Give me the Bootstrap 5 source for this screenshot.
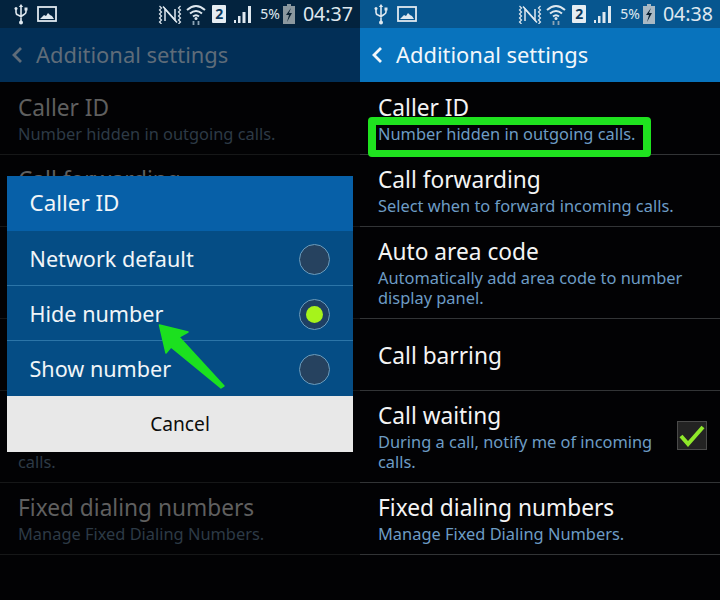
<!doctype html>
<html lang="en">
<head>
<meta charset="utf-8">
<title>Additional settings</title>
<link href="https://cdn.jsdelivr.net/npm/bootstrap@5.3.0/dist/css/bootstrap.min.css" rel="stylesheet">
<style>
html,body{margin:0;width:720px;height:600px;overflow:hidden;background:#020204}
body{font-family:"Noto Sans","Open Sans",sans-serif}
.handset{width:360px;height:600px;position:relative;overflow:hidden;background:#020204;
  --st:#07568f;--hd:#0873bd;--hdtx:#f2f7fb;--ti:#f4f4f4;--su:#6d9cc4;--ln:#323436;--bat:#a9b9c4}
.handset.dimmed{--st:#03233e;--hd:#022f57;--hdtx:#5f6c79;--ti:#5f5f5f;--su:#2d3a46;--ln:#161718;--bat:#8b989f}
.stat{height:28px;background:var(--st);color:#dfe8ef;padding:0 7px 0 14px}
.stat svg{display:block;flex:none}
.picicon{margin-left:9px}
.wifiicon{margin-left:4px}
.clock{font-size:19.6px;line-height:28px;margin-left:8px}
.pct{font-size:14px;line-height:28px;margin-left:8px;margin-right:3px}
.simtag{width:14px;height:18px;background:#e6edf2;color:#0b3a5e;font-size:14px;font-weight:700;line-height:18px;text-align:center;border-radius:1px;margin-left:6px;margin-right:8px}
.headbar{height:54px;background:var(--hd);color:var(--hdtx);padding:0 0 0 11px}
.headbar span{font-size:21.9px;line-height:54px;margin-left:13px;white-space:nowrap}
.setlist{--bs-list-group-bg:transparent;--bs-list-group-border-width:0;border-radius:0}
.setrow{height:72.5px;padding:3px 18px 0;background:transparent;border-bottom:1px solid var(--ln)!important}
.setrow.tallrow{height:91.5px}
.rowtitle{font-size:22.7px;line-height:25px;color:var(--ti);white-space:nowrap}
.rowsub{font-size:16.4px;line-height:20px;color:var(--su);margin-top:4px}
.tick{width:30px;height:29px;background:#232323;border:1px solid #4a4a4a;flex:none;margin-right:-5px;margin-bottom:4px}
.dimmed .tick{visibility:hidden}
.mark-box{position:absolute;left:8px;top:117px;width:283px;height:40px;border:8px solid #1fe21f;border-bottom-width:7px;border-radius:4px}
.callerdlg{position:absolute;left:7px;top:176px;width:346px;height:276px;background:#054d85;color:#f1f5f8}
.dlghead{height:55px;background:#0760a8;padding-left:22.5px;font-size:22.4px;line-height:53px}
.dlgopt{height:55px;padding:2px 23px 0 22.5px;font-size:21.6px;border-bottom:1px solid #2c75a8}
.dlgopt.lastopt{border-bottom:0}
.dlgcancel{height:56px;background:#e8e8e8;color:#0c0c0c;font-size:19.2px;line-height:56px;text-align:center;border:0;border-radius:0;padding:0;width:100%;display:block}
.optdot{width:31px;height:31px;border-radius:50%;background:#26425f;border:1px solid #6a9cbd;flex:none}
.optdot.chosen{background:#1e3f63}
.optdot.chosen::after{content:"";width:17px;height:17px;border-radius:50%;background:#a6f31b}
.pointer{position:absolute;left:150px;top:315px}
</style>
</head>
<body>
<div class="d-flex">

<section class="handset dimmed">
  <div class="stat d-flex align-items-center">
    <svg width="14" height="21" viewBox="0 0 14 21" fill="none" stroke="#dfe8ef" stroke-width="1.600"><path d="M7 3v14M2 5v3.500q0 2 2 2.500l3 1.500 3-2q2-1 2-2.500V6"/><path d="M7 0l2.200 3H4.800z" fill="#dfe8ef" stroke="none"/><circle cx="7" cy="18.500" r="2" fill="#dfe8ef" stroke="none"/><circle cx="2" cy="4.500" r="1.500" fill="#dfe8ef" stroke="none"/><rect x="10.500" y="3.500" width="3" height="3" fill="#dfe8ef" stroke="none"/></svg>
    <svg class="picicon" width="20" height="16" viewBox="0 0 20 16"><rect x="1" y="1" width="18" height="14" fill="none" stroke="#dfe8ef" stroke-width="1.800"/><path d="M3 13l4-4 2 1 2-3 2 2 2 1 2 3z" fill="#dfe8ef"/></svg>
    <div class="ms-auto d-flex align-items-center">
      <svg width="24" height="19" viewBox="0 0 24 19" fill="none" stroke="#dfe8ef"><path d="M1.500 1l2 2-2 2 2 2-2 2 2 2-2 2 2 2-2 2 2 2M22.500 1l-2 2 2 2-2 2 2 2-2 2 2 2-2 2 2 2-2 2" stroke-width="1.200"/><path d="M7 16V4l10 11V4" stroke-width="1.500"/><path d="M5 1.500l14 16" stroke-width="1.500"/></svg>
      <svg class="wifiicon" width="20" height="23" viewBox="0 0 20 23" fill="none" stroke="#dfe8ef" stroke-width="2"><path d="M1 7q9-8 18 0M4 10.500q6-5 12 0M7 13.500q3-2.500 6 0"/><circle cx="10" cy="15.500" r="1.500" fill="#dfe8ef" stroke="none"/><path d="M7.500 18v4M12.500 22v-4" stroke="#8ea5b6" stroke-width="1.800"/></svg>
      <div class="simtag">2</div>
      <svg width="18" height="18" viewBox="0 0 18 18" fill="#dfe8ef"><rect x="0" y="15" width="2" height="3"/><rect x="4" y="11" width="2.500" height="7"/><rect x="8.500" y="7" width="3" height="11"/><rect x="14" y="1" width="3" height="17"/></svg>
      <span class="pct">5%</span>
      <svg width="12" height="20" viewBox="0 0 12 20"><rect x="4" y="0" width="4" height="2" fill="#8b989f"/><rect x="0" y="2" width="12" height="18" fill="#8b989f"/><path d="M8 4L3 11h3l-2 7 5-9H6z" fill="#0c2233"/></svg>
      <span class="clock">04:37</span>
    </div>
  </div>
  <nav class="navbar headbar flex-nowrap justify-content-start">
    <svg width="12" height="18" viewBox="0 0 12 18" fill="none" stroke="currentColor" stroke-width="2.800"><path d="M10 2L3 9l7 7"/></svg>
    <span>Additional settings</span>
  </nav>
  <div class="list-group setlist">
    <div class="list-group-item setrow d-flex flex-column justify-content-center"><div class="rowtitle">Caller ID</div><div class="rowsub">Number hidden in outgoing calls.</div></div>
    <div class="list-group-item setrow d-flex flex-column justify-content-center"><div class="rowtitle">Call forwarding</div><div class="rowsub">Select when to forward incoming calls.</div></div>
    <div class="list-group-item setrow tallrow d-flex flex-column justify-content-center"><div class="rowtitle">Auto area code</div><div class="rowsub">Automatically add area code to number display panel.</div></div>
    <div class="list-group-item setrow d-flex flex-column justify-content-center"><div class="rowtitle">Call barring</div></div>
    <div class="list-group-item setrow tallrow d-flex align-items-center justify-content-between gap-3"><div><div class="rowtitle">Call waiting</div><div class="rowsub">During a call, notify me of incoming calls.</div></div><div class="tick"></div></div>
    <div class="list-group-item setrow d-flex flex-column justify-content-center"><div class="rowtitle">Fixed dialing numbers</div><div class="rowsub">Manage Fixed Dialing Numbers.</div></div>
  </div>
  <div class="callerdlg">
    <div class="dlghead">Caller ID</div>
    <div class="dlgopt d-flex align-items-center justify-content-between"><span>Network default</span><span class="optdot"></span></div>
    <div class="dlgopt d-flex align-items-center justify-content-between"><span>Hide number</span><span class="optdot chosen d-flex align-items-center justify-content-center"></span></div>
    <div class="dlgopt lastopt d-flex align-items-center justify-content-between"><span>Show number</span><span class="optdot"></span></div>
    <button class="btn dlgcancel" type="button">Cancel</button>
  </div>
  <svg class="pointer" width="84" height="84" viewBox="0 0 84 84"><path d="M9.500 10L38 17 29 22 74 71 71 73 21 32 16 38z" fill="#1ce01f" stroke="#1ce01f" stroke-width="1.500" stroke-linejoin="round"/></svg>
</section>

<section class="handset">
  <div class="stat d-flex align-items-center">
    <svg width="14" height="21" viewBox="0 0 14 21" fill="none" stroke="#dfe8ef" stroke-width="1.600"><path d="M7 3v14M2 5v3.500q0 2 2 2.500l3 1.500 3-2q2-1 2-2.500V6"/><path d="M7 0l2.200 3H4.800z" fill="#dfe8ef" stroke="none"/><circle cx="7" cy="18.500" r="2" fill="#dfe8ef" stroke="none"/><circle cx="2" cy="4.500" r="1.500" fill="#dfe8ef" stroke="none"/><rect x="10.500" y="3.500" width="3" height="3" fill="#dfe8ef" stroke="none"/></svg>
    <svg class="picicon" width="20" height="16" viewBox="0 0 20 16"><rect x="1" y="1" width="18" height="14" fill="none" stroke="#dfe8ef" stroke-width="1.800"/><path d="M3 13l4-4 2 1 2-3 2 2 2 1 2 3z" fill="#dfe8ef"/></svg>
    <div class="ms-auto d-flex align-items-center">
      <svg width="24" height="19" viewBox="0 0 24 19" fill="none" stroke="#dfe8ef"><path d="M1.500 1l2 2-2 2 2 2-2 2 2 2-2 2 2 2-2 2 2 2M22.500 1l-2 2 2 2-2 2 2 2-2 2 2 2-2 2 2 2-2 2" stroke-width="1.200"/><path d="M7 16V4l10 11V4" stroke-width="1.500"/><path d="M5 1.500l14 16" stroke-width="1.500"/></svg>
      <svg class="wifiicon" width="20" height="23" viewBox="0 0 20 23" fill="none" stroke="#dfe8ef" stroke-width="2"><path d="M1 7q9-8 18 0M4 10.500q6-5 12 0M7 13.500q3-2.500 6 0"/><circle cx="10" cy="15.500" r="1.500" fill="#dfe8ef" stroke="none"/><path d="M7.500 18v4M12.500 22v-4" stroke="#8ea5b6" stroke-width="1.800"/></svg>
      <div class="simtag">2</div>
      <svg width="18" height="18" viewBox="0 0 18 18" fill="#dfe8ef"><rect x="0" y="15" width="2" height="3"/><rect x="4" y="11" width="2.500" height="7"/><rect x="8.500" y="7" width="3" height="11"/><rect x="14" y="1" width="3" height="17"/></svg>
      <span class="pct">5%</span>
      <svg width="12" height="20" viewBox="0 0 12 20"><rect x="4" y="0" width="4" height="2" fill="#a9b9c4"/><rect x="0" y="2" width="12" height="18" fill="#a9b9c4"/><path d="M8 4L3 11h3l-2 7 5-9H6z" fill="#0c2233"/></svg>
      <span class="clock">04:38</span>
    </div>
  </div>
  <nav class="navbar headbar flex-nowrap justify-content-start">
    <svg width="12" height="18" viewBox="0 0 12 18" fill="none" stroke="currentColor" stroke-width="2.800"><path d="M10 2L3 9l7 7"/></svg>
    <span>Additional settings</span>
  </nav>
  <div class="list-group setlist">
    <div class="list-group-item setrow d-flex flex-column justify-content-center"><div class="rowtitle">Caller ID</div><div class="rowsub">Number hidden in outgoing calls.</div></div>
    <div class="list-group-item setrow d-flex flex-column justify-content-center"><div class="rowtitle">Call forwarding</div><div class="rowsub">Select when to forward incoming calls.</div></div>
    <div class="list-group-item setrow tallrow d-flex flex-column justify-content-center"><div class="rowtitle">Auto area code</div><div class="rowsub">Automatically add area code to number display panel.</div></div>
    <div class="list-group-item setrow d-flex flex-column justify-content-center"><div class="rowtitle">Call barring</div></div>
    <div class="list-group-item setrow tallrow d-flex align-items-center justify-content-between gap-3"><div><div class="rowtitle">Call waiting</div><div class="rowsub">During a call, notify me of incoming calls.</div></div>
      <div class="tick d-flex align-items-center justify-content-center"><svg width="26" height="22" viewBox="0 0 26 22" fill="none" stroke="#8fe82a" stroke-width="4"><path d="M2 11l7 8L24 2"/></svg></div></div>
    <div class="list-group-item setrow d-flex flex-column justify-content-center"><div class="rowtitle">Fixed dialing numbers</div><div class="rowsub">Manage Fixed Dialing Numbers.</div></div>
  </div>
  <div class="mark-box"></div>
</section>

</div>
<script src="https://cdn.jsdelivr.net/npm/bootstrap@5.3.0/dist/js/bootstrap.bundle.min.js"></script>
</body>
</html>
